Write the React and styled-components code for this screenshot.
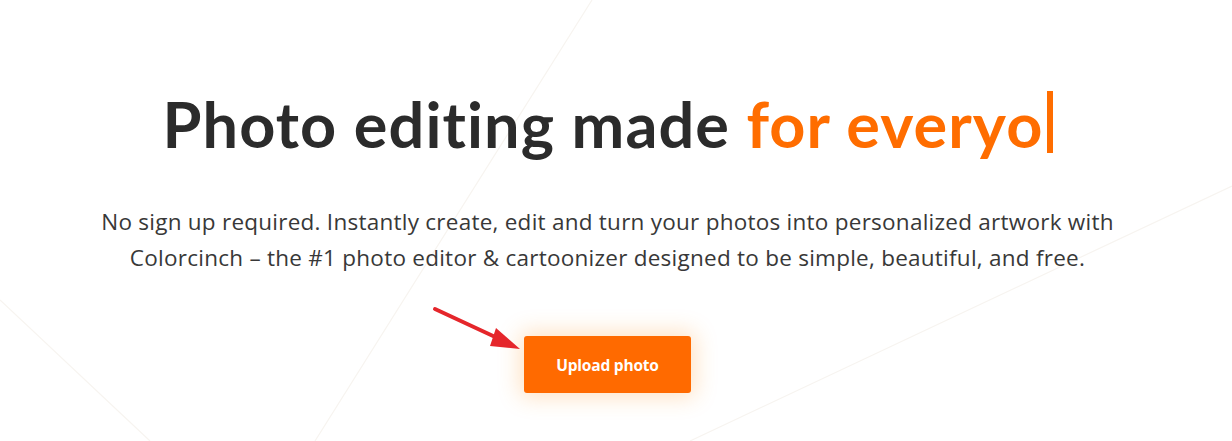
import styled, { createGlobalStyle } from 'styled-components';

const GlobalStyle = createGlobalStyle`
  html, body {
    margin: 0;
    padding: 0;
    background: #ffffff;
  }
  body {
    font-family: Lato, "Open Sans", Arial, sans-serif;
    -webkit-font-smoothing: antialiased;
  }
`;

const Hero = styled.section`
  position: relative;
  width: 100%;
  height: 441px;
  overflow: hidden;
  display: flex;
  flex-direction: column;
  align-items: center;
  padding: 86px 17px 0 0;
  box-sizing: border-box;
`;

const Backdrop = styled.svg`
  position: absolute;
  inset: 0;
  width: 100%;
  height: 100%;
  pointer-events: none;
`;

const Title = styled.h1`
  position: relative;
  margin: 0;
  font-size: 63px;
  font-weight: 700;
  line-height: 76px;
  letter-spacing: 1.1px;
  color: #2b2b2b;
  white-space: nowrap;
  display: flex;
  align-items: center;
`;

const Highlight = styled.span`
  color: #ff6d00;
  margin-left: 0.26em;
`;

const Caret = styled.span`
  display: inline-block;
  width: 6px;
  height: 62px;
  margin-left: 3px;
  margin-top: -4px;
  background: #ff6d00;
`;

const Lead = styled.p`
  position: relative;
  margin: 42px 0 0;
  max-width: 1150px;
  text-align: center;
  font-family: "Open Sans", Lato, Arial, sans-serif;
  font-size: 22.5px;
  font-weight: 400;
  line-height: 36px;
  letter-spacing: 0.25px;
  color: #383838;
  white-space: nowrap;
`;

const Actions = styled.div`
  position: relative;
  margin-top: 60px;
`;

const UploadButton = styled.button`
  width: 167px;
  height: 57px;
  border: none;
  border-radius: 3px;
  background: #ff6a00;
  color: #ffffff;
  font-family: "Open Sans", Lato, Arial, sans-serif;
  font-size: 15.5px;
  font-weight: 700;
  letter-spacing: -0.2px;
  cursor: pointer;
  box-shadow: 0 0 22px 4px rgba(255, 150, 40, 0.28);
`;

const Pointer = styled.svg`
  position: absolute;
  left: -92px;
  top: -30px;
  width: 92px;
  height: 50px;
  overflow: visible;
`;

export default function App() {
  return (
    <>
      <GlobalStyle />
      <Hero>
        <Backdrop viewBox="0 0 1232 441" preserveAspectRatio="none">
          <g stroke="#f7f4f0" strokeWidth="1.2" fill="none">
            <line x1="592" y1="0" x2="315" y2="441" />
            <line x1="1232" y1="186" x2="690" y2="441" />
            <line x1="0" y1="300" x2="150" y2="441" />
          </g>
        </Backdrop>

        <Title>
          Photo editing made
          <Highlight>for everyo</Highlight>
          <Caret />
        </Title>

        <Lead>
          No sign up required. Instantly create, edit and turn your photos into personalized artwork with
          <br />
          Colorcinch – the #1 photo editor &amp; cartoonizer designed to be simple, beautiful, and free.
        </Lead>

        <Actions>
          <Pointer viewBox="0 0 92 50">
            <line x1="3" y1="3" x2="74" y2="36" stroke="#e5262b" strokeWidth="4" strokeLinecap="round" />
            <polygon points="88,43 64,22 58,40" fill="#e5262b" />
          </Pointer>
          <UploadButton>Upload photo</UploadButton>
        </Actions>
      </Hero>
    </>
  );
}
